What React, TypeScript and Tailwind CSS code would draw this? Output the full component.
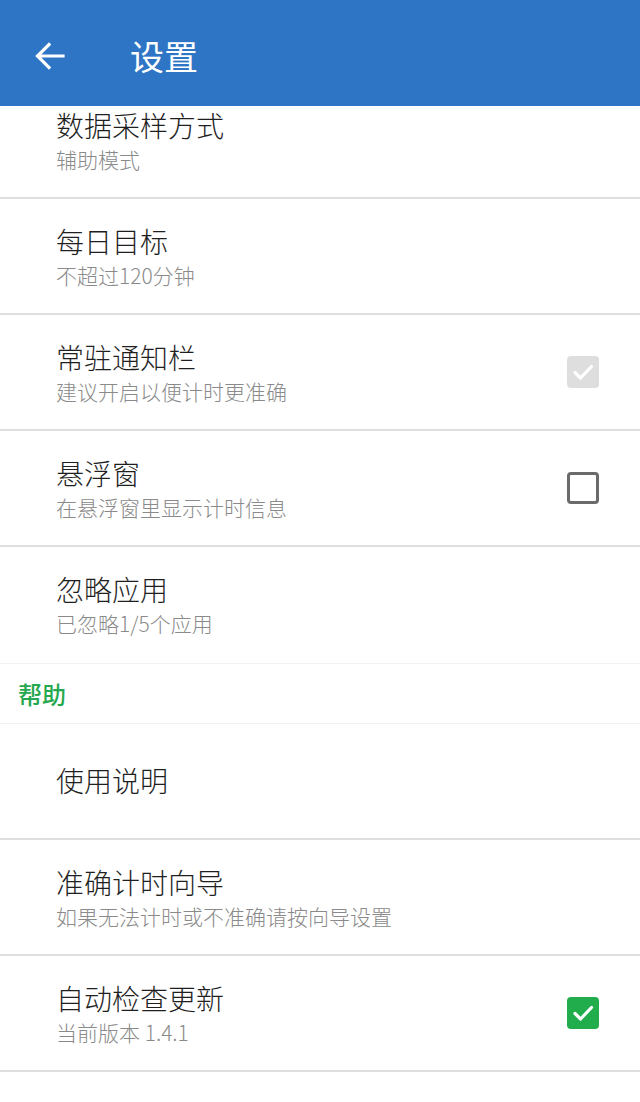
import React from "react";

const font = { fontFamily: '"Noto Sans CJK SC", "Noto Sans", sans-serif' };

function Check({ state }: { state: "disabled" | "off" | "on" }) {
  if (state === "off") {
    return <div className="w-[32px] h-[32px] rounded-[4px] border-[3px] border-[#6b6b6b] bg-white" />;
  }
  const bg = state === "on" ? "bg-[#22ad4c]" : "bg-[#dedede]";
  return (
    <div className={`w-[32px] h-[32px] rounded-[4px] ${bg} flex items-center justify-center`}>
      <svg width="24" height="24" viewBox="0 0 24 24" fill="none">
        <path d="M4 12.5 L9.5 18 L20.5 6.5" stroke="white" strokeWidth="3.2" strokeLinecap="round" strokeLinejoin="round" />
      </svg>
    </div>
  );
}

function Row({ title, sub, check }: { title: string; sub?: string; check?: "disabled" | "off" | "on" }) {
  return (
    <div className="h-[116px] border-b-2 border-[#dedede] flex items-start pl-[56px] pr-[41px] bg-white">
      <div className={`flex-1 flex flex-col ${sub ? "pt-[24px]" : "pt-[38px]"}`}>
        <div className="text-[28px] leading-[36px] font-light text-[#1f1f1f]">{title}</div>
        {sub && <div className="mt-[2px] text-[21px] leading-[28px] font-light text-[#8a8a8a]">{sub}</div>}
      </div>
      {check && (
        <div className="h-[114px] flex items-center">
          <Check state={check} />
        </div>
      )}
    </div>
  );
}

export default function App() {
  return (
    <div className="w-[640px] h-[1102px] bg-white overflow-hidden flex flex-col" style={font}>
      <div className="relative z-10 h-[106px] shrink-0 bg-[#2f75c5] flex items-center pt-[5px]">
        <div className="w-[130px] pl-[35px] flex items-center">
          <svg width="30" height="28" viewBox="0 0 30 28" fill="none">
            <path d="M28 14 H3 M14 2.5 L2.5 14 L14 25.5" stroke="white" strokeWidth="3.2" strokeLinecap="square" />
          </svg>
        </div>
        <div className="text-[34px] leading-[40px] text-white">设置</div>
      </div>
      <div className="h-[93px] shrink-0 overflow-hidden">
        <div className="-mt-[23px]">
          <Row title="数据采样方式" sub="辅助模式" />
        </div>
      </div>
      <Row title="每日目标" sub="不超过120分钟" />
      <Row title="常驻通知栏" sub="建议开启以便计时更准确" check="disabled" />
      <Row title="悬浮窗" sub="在悬浮窗里显示计时信息" check="off" />
      <div className="h-[116px] flex items-start pl-[56px] bg-white">
        <div className="flex flex-col pt-[24px]">
          <div className="text-[28px] leading-[36px] font-light text-[#1f1f1f]">忽略应用</div>
          <div className="mt-[2px] text-[21px] leading-[28px] font-light text-[#8a8a8a]">已忽略1/5个应用</div>
        </div>
      </div>
      <div className="h-[61px] border-t border-b border-[#f3f3f3] flex items-center pl-[18px] bg-white">
        <div className="text-[24px] leading-[30px] font-medium text-[#25a84f]">帮助</div>
      </div>
      <Row title="使用说明" />
      <Row title="准确计时向导" sub="如果无法计时或不准确请按向导设置" />
      <Row title="自动检查更新" sub="当前版本 1.4.1" check="on" />
    </div>
  );
}
